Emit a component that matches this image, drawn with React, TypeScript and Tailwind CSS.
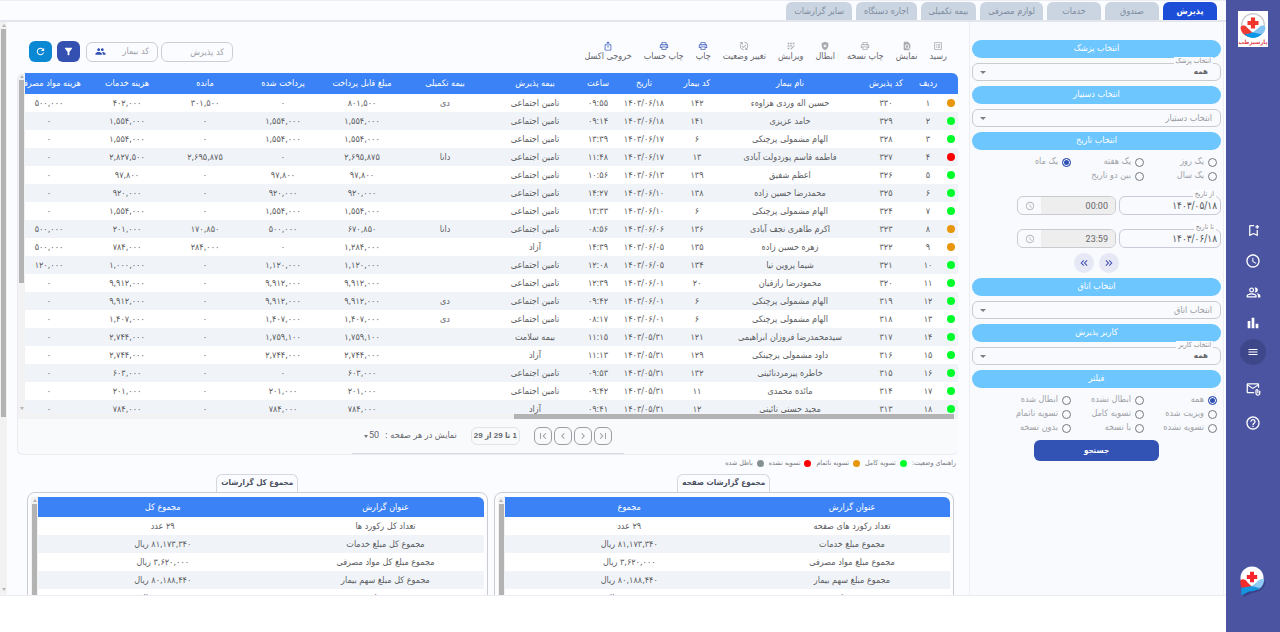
import { type ReactNode } from 'react';
import clsx from 'clsx';
import {
  MdAccessTime,
  MdBarChart,
  MdChevronLeft,
  MdChevronRight,
  MdFilterAlt,
  MdFindInPage,
  MdFirstPage,
  MdGppBad,
  MdHelpOutline,
  MdKeyboardDoubleArrowLeft,
  MdKeyboardDoubleArrowRight,
  MdLastPage,
  MdListAlt,
  MdMenu,
  MdOutlineAppRegistration,
  MdOutlineAttachEmail,
  MdOutlineBookmarkAdd,
  MdOutlineIosShare,
  MdOutlineLocalPrintshop,
  MdOutlinePeopleAlt,
  MdOutlinePublishedWithChanges,
  MdPeople,
  MdRefresh,
} from 'react-icons/md';

const fa = (value: string) => value.replace(/\d/g, (d) => '۰۱۲۳۴۵۶۷۸۹'[Number(d)]);

const TABS = ['پذیرش', 'صندوق', 'خدمات', 'لوازم مصرفی', 'بیمه تکمیلی', 'اجاره دستگاه', 'سایر گزارشات'];

const ACTIONS = [
  { label: 'رسید', Icon: MdListAlt, active: false },
  { label: 'نمایش', Icon: MdFindInPage, active: false },
  { label: 'چاپ نسخه', Icon: MdOutlineLocalPrintshop, active: false },
  { label: 'ابطال', Icon: MdGppBad, active: false },
  { label: 'ویرایش', Icon: MdOutlineAppRegistration, active: false },
  { label: 'تغییر وضعیت', Icon: MdOutlinePublishedWithChanges, active: false },
  { label: 'چاپ', Icon: MdOutlineLocalPrintshop, active: true },
  { label: 'چاپ حساب', Icon: MdOutlineLocalPrintshop, active: true },
  { label: 'خروجی اکسل', Icon: MdOutlineIosShare, active: true },
];

const HEADERS = [
  '', 'ردیف', 'کد پذیرش', 'نام بیمار', 'کد بیمار', 'تاریخ', 'ساعت', 'بیمه پذیرش', 'بیمه تکمیلی',
  'مبلغ قابل پرداخت', 'پرداخت شده', 'مانده', 'هزینه خدمات', 'هزینه مواد مصرفی',
];

const SOCIAL = 'تامین اجتماعی';

type Status = 'full' | 'partial' | 'unpaid' | 'void';

const STATUS_COLOR: Record<Status, string> = {
  full: 'bg-[#00ff2a]',
  partial: 'bg-[#e8960c]',
  unpaid: 'bg-[#ff0000]',
  void: 'bg-[#869090]',
};

// status, code, name, patient code, date, time, insurance, extra insurance, payable, paid, remaining, services, materials
const ROWS: [Status, ...string[]][] = [
  ['partial', '330', 'حسین اله وردی هزاوهء', '142', '06/18', '09:55', SOCIAL, 'دی', '801,500', '0', '301,500', '402,000', '500,000'],
  ['full', '329', 'حامد عزیزی', '141', '06/18', '09:14', SOCIAL, '', '1,554,000', '1,554,000', '0', '1,554,000', '0'],
  ['full', '328', 'الهام مشمولی پرچنکی', '6', '06/17', '13:39', SOCIAL, '', '1,554,000', '1,554,000', '0', '1,554,000', '0'],
  ['unpaid', '327', 'فاطمه قاسم پوردولت آبادی', '13', '06/17', '11:48', SOCIAL, 'دانا', '2,695,875', '0', '2,695,875', '2,827,500', '0'],
  ['full', '326', 'اعظم شفیق', '139', '06/13', '10:56', SOCIAL, '', '97,800', '97,800', '0', '97,800', '0'],
  ['full', '325', 'محمدرضا حسین زاده', '138', '06/10', '14:27', SOCIAL, '', '920,000', '920,000', '0', '920,000', '0'],
  ['full', '324', 'الهام مشمولی پرچنکی', '6', '06/10', '13:33', SOCIAL, '', '1,554,000', '1,554,000', '0', '1,554,000', '0'],
  ['partial', '323', 'اکرم طاهری نجف آبادی', '136', '06/06', '08:56', SOCIAL, 'دانا', '670,850', '500,000', '170,850', '201,000', '500,000'],
  ['partial', '322', 'زهره حسین زاده', '135', '06/05', '14:39', 'آزاد', '', '1,284,000', '0', '284,000', '784,000', '500,000'],
  ['full', '321', 'شیما پروین نیا', '134', '06/05', '12:08', SOCIAL, '', '1,120,000', '1,120,000', '0', '1,000,000', '120,000'],
  ['full', '320', 'محمودرضا رازقیان', '20', '06/01', '12:39', SOCIAL, '', '9,912,000', '9,912,000', '0', '9,912,000', '0'],
  ['full', '319', 'الهام مشمولی پرچنکی', '6', '06/01', '09:42', SOCIAL, 'دی', '9,912,000', '9,912,000', '0', '9,912,000', '0'],
  ['full', '318', 'الهام مشمولی پرچنکی', '6', '06/01', '08:17', SOCIAL, 'دی', '1,407,000', '1,407,000', '0', '1,407,000', '0'],
  ['full', '317', 'سیدمحمدرضا فروزان ابراهیمی', '121', '05/31', '11:15', 'بیمه سلامت', '', '1,759,100', '1,759,100', '0', '2,744,000', '0'],
  ['full', '316', 'داود مشمولی پرچینکی', '129', '05/31', '11:13', 'آزاد', '', '2,744,000', '2,744,000', '0', '2,744,000', '0'],
  ['full', '315', 'خاطره پیرمردنائینی', '132', '05/31', '09:53', SOCIAL, '', '603,000', '0', '0', '603,000', '0'],
  ['full', '314', 'مائده محمدی', '11', '05/31', '09:42', SOCIAL, '', '201,000', '201,000', '0', '201,000', '0'],
  ['full', '313', 'مجید حسنی نائینی', '12', '05/31', '09:41', 'آزاد', '', '784,000', '784,000', '0', '784,000', '0'],
];

const LEGEND: { label: string; status: Status }[] = [
  { label: 'تسویه کامل', status: 'full' },
  { label: 'تسویه ناتمام', status: 'partial' },
  { label: 'تسویه نشده', status: 'unpaid' },
  { label: 'باطل شده', status: 'void' },
];

const PAGE_TOTALS = [
  ['تعداد رکورد های صفحه', '29 عدد'],
  ['مجموع مبلغ خدمات', '81,173,340 ریال'],
  ['مجموع مبلغ مواد مصرفی', '3,620,000 ریال'],
  ['مجموع مبلغ سهم بیمار', '80,188,440 ریال'],
  ['مجموع مانده', '984,900 ریال'],
];

const ALL_TOTALS = [
  ['تعداد کل رکورد ها', '29 عدد'],
  ['مجموع کل مبلغ خدمات', '81,173,340 ریال'],
  ['مجموع مبلغ کل مواد مصرفی', '3,620,000 ریال'],
  ['مجموع کل مبلغ سهم بیمار', '80,188,440 ریال'],
  ['مجموع مانده', '984,900 ریال'],
];

function Logo() {
  return (
    <div className="flex h-9 w-[30px] flex-col items-center bg-white pt-px">
      <svg viewBox="0 0 28 26" className="h-[26px] w-7" aria-hidden="true">
        <circle cx="14" cy="13" r="11.3" fill="none" stroke="#c9ccd1" strokeWidth="1.4" />
        <path d="M1.5 15.5 C2.5 13 6 13 7.5 15 L14 21 L11 25 C6 24.4 2 21 1.5 15.5Z" fill="#ef3b33" />
        <path d="M26.5 15.5 C25.5 13 22 13 20.5 15 L12.5 21.5 L17 25 C22 24.4 26 21 26.5 15.5Z" fill="#84c4f2" />
        <path d="M5 21.5 C9 23 11 20.4 14 20.6 C17 20.4 20 23 23 21.5 C20 25 17 26 14 26 C11 26 8 25 5 21.5Z" fill="#0a97e6" />
        <path d="M11.9 5.5 h4.2 v3.4 h3.4 v4.2 h-3.4 v3.4 h-4.2 v-3.4 h-3.4 v-4.2 h3.4z" fill="#f0352d" />
      </svg>
      <span className="text-[6px] leading-[8px] font-bold text-[#e5484d]">پارسیزطب</span>
    </div>
  );
}

function ChatBubble() {
  return (
    <svg viewBox="0 0 26 32" className="h-8 w-[26px]" aria-hidden="true">
      <path d="M4 24 L3 31 L12 27 C20 26 25 22 25.5 15z" fill="#25306f" opacity="0.5" />
      <circle cx="12" cy="12" r="11.5" fill="#fff" />
      <path d="M0.5 14 C3 12.5 6 13.5 7.5 16.5 L12 20.5 L2 22 C0.6 20 0.2 17 0.5 14Z" fill="#f32c2c" />
      <path d="M24 13 C21 12.6 18 14 16 17 L11 20.5 L18 23.5 C22 21.5 24.4 17.5 24 13Z" fill="#8fcbf4" />
      <path d="M1.5 21.5 C5 21.8 8 20 12 20.2 C15 20.5 17 22 20 21.6 C17.5 24.2 13.5 25.4 9 25.6 L1.2 29.5Z" fill="#1597e0" />
      <path d="M10 5.8 h4 v3.2 h3.2 v4 h-3.2 v3.2 h-4 v-3.2 h-3.2 v-4 h3.2z" fill="#f8252c" />
    </svg>
  );
}

function Sidebar() {
  const item = 'flex size-[26px] items-center justify-center text-white';
  return (
    <nav className="flex w-[54px] shrink-0 flex-col items-center bg-[#4a54a0] pt-[11px] pb-[34px]">
      <Logo />
      <div className="mt-[170px] flex flex-col items-center gap-[5px]">
        <button aria-label="نشان" className={item}><MdOutlineBookmarkAdd size={15} /></button>
        <button aria-label="ساعت" className={item}><MdAccessTime size={16} /></button>
        <button aria-label="بیماران" className={item}><MdOutlinePeopleAlt size={15} /></button>
        <button aria-label="آمار" className={item}><MdBarChart size={16} /></button>
      </div>
      <div className="mt-[3px] flex flex-col items-center gap-2">
        <button aria-label="منو" className={clsx(item, 'rounded-full bg-[#3f478b]')}><MdMenu size={12} /></button>
        <button aria-label="پیام" className={clsx(item, 'mt-[3px]')}><MdOutlineAttachEmail size={15} /></button>
        <button aria-label="راهنما" className={item}><MdHelpOutline size={16} /></button>
      </div>
      <div className="mt-auto">
        <ChatBubble />
      </div>
    </nav>
  );
}

function Tabs() {
  return (
    <div className="flex h-[21px] shrink-0 items-end gap-1 border-b-2 border-[#e3e6ec] bg-[#fbfcff] ps-[9px]">
      {TABS.map((tab, i) => (
        <button
          key={tab}
          className={clsx(
            'h-[18px] min-w-[54px] rounded-t-md px-2 text-[9px] leading-[18px]',
            i === 0 ? 'bg-[#1d4ed8] font-bold text-white' : 'bg-[#cbd5e1] text-[#7d8ba0]',
          )}
        >
          {tab}
        </button>
      ))}
    </div>
  );
}

function Pill({ children }: { children: ReactNode }) {
  return (
    <h2 className="h-[18px] rounded-full bg-[#6ec6ff] text-center text-[9px] leading-[17px] text-white">{children}</h2>
  );
}

function SelectField({ label, value }: { label: string; value?: string }) {
  return (
    <label className="relative block">
      {value && (
        <span className="absolute start-2 -top-1.5 bg-[#f8fafd] px-0.5 text-[7px] leading-[8px] text-[#8b8b8f]">{label}</span>
      )}
      <select
        aria-label={label}
        className={clsx(
          'block h-[18px] w-full appearance-none rounded-md border border-[#c9cbd0] bg-transparent leading-4 outline-none',
          value ? 'ps-3 text-[8px] font-bold text-[#66666a]' : 'ps-2 text-[9px] text-[#9a9a9f]',
        )}
      >
        <option>{value ?? label}</option>
      </select>
      <span className="absolute end-2 top-2 border-x-3 border-t-3 border-x-transparent border-t-[#7d7d80]" />
    </label>
  );
}

function Radios({ name, options, selected }: { name: string; options: string[]; selected: string }) {
  return (
    <div className="grid grid-cols-[73px_73px_73px] ps-1">
      {options.map((option) => (
        <label key={option} className="flex h-3.5 items-center gap-1 text-[9px] whitespace-nowrap text-[#a0a2a8]">
          <input
            type="radio"
            name={name}
            defaultChecked={option === selected}
            className="size-[9px] shrink-0 appearance-none rounded-full border border-[#77787c] checked:border-[#3050b4] checked:bg-[#3050b4] checked:shadow-[inset_0_0_0_1px_#fff]"
          />
          {option}
        </label>
      ))}
    </div>
  );
}

function DateRow({ label, date, time }: { label: string; date: string; time: string }) {
  return (
    <div className="flex gap-[3px]">
      <label className="relative block w-[102px]">
        <span className="absolute start-[5px] -top-1.5 bg-[#fdfdff] px-0.5 text-[7px] leading-[8px] text-[#8b8b8f]">{label}</span>
        <input
          defaultValue={fa(date)}
          className="block h-[19px] w-full rounded-md border border-[#c9cbd8] bg-transparent ps-[3px] text-[10px] text-[#55565a] outline-none"
        />
      </label>
      <label className="flex h-[19px] w-[99px] items-center overflow-hidden rounded-md border border-[#c9cbd0]">
        <input
          aria-label={`ساعت ${label}`}
          defaultValue={time}
          className="h-full w-[74px] bg-[#eeeeee] ps-[7px] font-[Roboto] text-[9px] text-[#66666a] outline-none"
        />
        <MdAccessTime size={10} className="mx-auto text-[#b4b4b8]" />
      </label>
    </div>
  );
}

function FilterPanel() {
  const round = 'flex size-5 items-center justify-center rounded-full bg-[#e6e8f5] text-[#3f51b5]';
  return (
    <form className="flex w-[255px] shrink-0 flex-col gap-[5px] border-x border-[#eceef3] bg-[#f8fafd] px-0.5 pt-[18px]">
      <Pill>انتخاب پزشک</Pill>
      <SelectField label="انتخاب پزشک" value="همه" />
      <Pill>انتخاب دستیار</Pill>
      <SelectField label="انتخاب دستیار" />
      <Pill>انتخاب تاریخ</Pill>
      <Radios name="range" options={['یک روز', 'یک هفته', 'یک ماه', 'یک سال', 'بین دو تاریخ']} selected="یک ماه" />
      <div className="flex flex-col gap-3.5 pt-2">
        <DateRow label="از تاریخ" date="1403/05/18" time="00:00" />
        <DateRow label="تا تاریخ" date="1403/06/18" time="23:59" />
      </div>
      <div className="flex justify-center gap-[5px]">
        <button type="button" aria-label="قبلی" className={round}><MdKeyboardDoubleArrowRight size={12} /></button>
        <button type="button" aria-label="بعدی" className={round}><MdKeyboardDoubleArrowLeft size={12} /></button>
      </div>
      <Pill>انتخاب اتاق</Pill>
      <SelectField label="انتخاب اتاق" />
      <Pill>کاربر پذیرش</Pill>
      <SelectField label="انتخاب کاربر" value="همه" />
      <Pill>فیلتر</Pill>
      <Radios
        name="filter"
        options={['همه', 'ابطال نشده', 'ابطال شده', 'ویزیت شده', 'تسویه کامل', 'تسویه ناتمام', 'تسویه نشده', 'با نسخه', 'بدون نسخه']}
        selected="همه"
      />
      <button type="button" className="h-[21px] w-1/2 self-center rounded-md bg-[#3252b4] text-[8px] font-bold text-white">
        جستجو
      </button>
    </form>
  );
}

function Toolbar() {
  return (
    <div className="flex h-[51px] items-center ps-[11px] pe-3 pt-2">
      <div className="flex gap-3">
        {ACTIONS.map(({ label, Icon, active }) => (
          <button key={label} className="flex flex-col items-center text-[9px] leading-[11px] whitespace-nowrap text-[#66676c]">
            <Icon size={10} className={active ? 'text-[#4a66c0]' : 'text-[#a9abb0]'} />
            {label}
          </button>
        ))}
      </div>
      <div className="ms-auto flex items-center gap-[3px]">
        <input
          aria-label="کد پذیرش"
          placeholder="کد پذیرش"
          className="h-5 w-[72px] rounded-md border border-[#cdcfd6] bg-transparent ps-2 text-[9px] outline-none placeholder:text-[#a0a1a6]"
        />
        <label className="flex h-5 w-[72px] items-center rounded-md border border-[#cdcfd6] ps-2 pe-2">
          <input
            aria-label="کد بیمار"
            placeholder="کد بیمار"
            className="min-w-0 flex-1 bg-transparent text-[9px] outline-none placeholder:text-[#a0a1a6]"
          />
          <MdPeople size={11} className="text-[#3050b4]" />
        </label>
      </div>
      <div className="ms-1.5 flex gap-[5px]">
        <button aria-label="فیلتر" className="flex h-[21px] w-[23px] items-center justify-center rounded-md bg-[#3450b0] text-white">
          <MdFilterAlt size={11} />
        </button>
        <button aria-label="بارگذاری مجدد" className="flex h-[21px] w-[23px] items-center justify-center rounded-md bg-[#0a88d4] text-white">
          <MdRefresh size={11} />
        </button>
      </div>
    </div>
  );
}

function ScrollTrack({ thumb }: { thumb: string }) {
  return (
    <div className="flex w-[7px] shrink-0 flex-col items-center bg-[#f2f2f2]">
      <span className="my-0.5 border-x-2 border-b-3 border-x-transparent border-b-[#b5b5b5]" />
      <div className={clsx('w-[5px] bg-[#b3b3b3]', thumb)} />
      <span className="mt-auto mb-1 border-x-2 border-t-3 border-x-transparent border-t-[#b5b5b5]" />
    </div>
  );
}

function Admissions() {
  return (
    <div className="flex h-[341px] overflow-hidden rounded-t-md">
      <div className="min-w-0 flex-1 overflow-hidden">
        <table className="w-full min-w-[948px] table-fixed text-center text-[9px] whitespace-nowrap text-[#5c5d61]">
          <colgroup>
            <col className="w-[14px]" />
            <col className="w-8" />
            <col className="w-[52px]" />
            <col />
            <col className="w-[46px]" />
            <col className="w-[60px]" />
            <col className="w-8" />
            <col className="w-[94px]" />
            <col className="w-[86px]" />
            <col className="w-20" />
            <col className="w-[78px]" />
            <col className="w-[78px]" />
            <col className="w-[78px]" />
            <col className="w-[78px]" />
          </colgroup>
          <thead className="bg-[#3b82f6] text-white">
            <tr className="h-[21px]">
              {HEADERS.map((header, i) => (
                <th key={i} className="p-0 pb-0.5 leading-[18px] font-normal">{header}</th>
              ))}
            </tr>
          </thead>
          <tbody>
            {ROWS.map(([status, code, name, patient, date, ...rest], i) => (
              <tr key={code} className="h-[18px] odd:bg-white even:bg-[#f0f4f9]">
                <td className="p-0">
                  <span className={clsx('mx-auto block size-2 rounded-full', STATUS_COLOR[status])} />
                </td>
                <td className="p-0 leading-4">{fa(String(i + 1))}</td>
                <td className="p-0 leading-4">{fa(code)}</td>
                <td className="p-0 leading-4">{name}</td>
                <td className="p-0 leading-4">{fa(patient)}</td>
                <td className="p-0 leading-4">{fa(`1403/${date}`)}</td>
                {rest.map((cell, j) => (
                  <td key={j} className="p-0 leading-4">{fa(cell)}</td>
                ))}
              </tr>
            ))}
          </tbody>
        </table>
      </div>
      <ScrollTrack thumb="h-[203px]" />
    </div>
  );
}

function Pagination() {
  const box = 'flex size-[18px] items-center justify-center rounded-md border border-[#9d9ea3] text-[#a0a1a6]';
  return (
    <div className="flex h-[34px] items-center justify-center text-[9px] text-[#66676c]">
      <div className="flex gap-0.5">
        <button aria-label="اولین صفحه" className={box}><MdLastPage size={12} /></button>
        <button aria-label="صفحه قبل" className={box}><MdChevronRight size={12} /></button>
        <button aria-label="صفحه بعد" className={box}><MdChevronLeft size={12} /></button>
        <button aria-label="آخرین صفحه" className={box}><MdFirstPage size={12} /></button>
      </div>
      <span className="ms-3.5 rounded-md border border-[#e2e3e8] px-0.5 font-['Liberation_Sans','DejaVu_Sans_Condensed',sans-serif] text-[8px] leading-4 font-bold">
        1 تا 29 از 29
      </span>
      <label className="ms-3.5 flex items-center gap-1.5">
        نمایش در هر صفحه :
        <span className="flex items-center">
          <select className="appearance-none bg-transparent font-[Roboto] text-[9px] outline-none">
            <option>50</option>
          </select>
          <span className="border-x-2 border-t-3 border-x-transparent border-t-[#77787c]" />
        </span>
      </label>
    </div>
  );
}

function Legend() {
  return (
    <div className="flex h-4 items-center gap-[5px] ps-0.5 text-[7px] text-[#77787c]">
      <span>راهنمای وضعیت:</span>
      {LEGEND.map(({ label, status }) => (
        <span key={label} className="flex items-center gap-1">
          <span className={clsx('size-[7px] rounded-full', STATUS_COLOR[status])} />
          {label}
        </span>
      ))}
    </div>
  );
}

function Summary({ title, valueHeader, rows }: { title: string; valueHeader: string; rows: string[][] }) {
  return (
    <section className="flex min-w-0 flex-1 flex-col items-center">
      <h3 className="h-[18px] rounded-t-md border border-b-0 border-[#d5d8e0] px-1 text-[8px] leading-4 font-bold text-[#4a5060]">
        {title}
      </h3>
      <div className="flex w-full rounded-t-lg border border-[#c9ccd4] bg-[#fdfdff] px-[3px] pt-1">
        <div className="min-w-0 flex-1">
          <table className="w-full table-fixed overflow-hidden rounded-tr-md text-center text-[9px] text-[#5c5d61]">
            <thead className="bg-[#3b82f6] text-white">
              <tr className="h-5">
                <th className="w-[44%] p-0 leading-[18px] font-normal">عنوان گزارش</th>
                <th className="p-0 leading-[18px] font-normal">{valueHeader}</th>
              </tr>
            </thead>
            <tbody>
              {rows.map(([name, value]) => (
                <tr key={name} className="h-[18px] odd:bg-white even:bg-[#f0f4f9]">
                  <td className="p-0 leading-4">{name}</td>
                  <td className="p-0 leading-4">{fa(value)}</td>
                </tr>
              ))}
            </tbody>
          </table>
        </div>
        <ScrollTrack thumb="flex-1" />
      </div>
    </section>
  );
}

export default function App() {
  return (
    <div dir="rtl" className="flex min-h-screen bg-white font-['DejaVu_Sans_Condensed','DejaVu_Sans',sans-serif]">
      <Sidebar />
      <main className="flex h-[calc(100vh-36px)] min-w-0 flex-1 flex-col overflow-hidden border-t border-b border-[#ebecf4] bg-[#fbfcff]">
        <Tabs />
        <div className="flex min-h-0 flex-1 ps-0.5">
          <FilterPanel />
          <div className="min-w-0 flex-1 overflow-hidden ps-[11px] pe-[10px]">
            <Toolbar />
            <div className="rounded-md border-e border-b border-[#e9ebf0] bg-[#f9fafc]">
              <Admissions />
              <div className="flex h-[5px] bg-[#f2f2f2] ps-1">
                <div className="w-[47%] bg-[#b3b3b3]" />
              </div>
              <Pagination />
              <div className="mx-auto h-px w-[29%] bg-[#d9dbe0]" />
            </div>
            <Legend />
            <div className="mt-[3px] flex gap-1.5 ps-1 pe-2.5">
              <Summary title="مجموع گزارشات صفحه" valueHeader="مجموع" rows={PAGE_TOTALS} />
              <Summary title="مجموع کل گزارشات" valueHeader="مجموع کل" rows={ALL_TOTALS} />
            </div>
          </div>
          <ScrollTrack thumb="h-[388px]" />
        </div>
      </main>
    </div>
  );
}
